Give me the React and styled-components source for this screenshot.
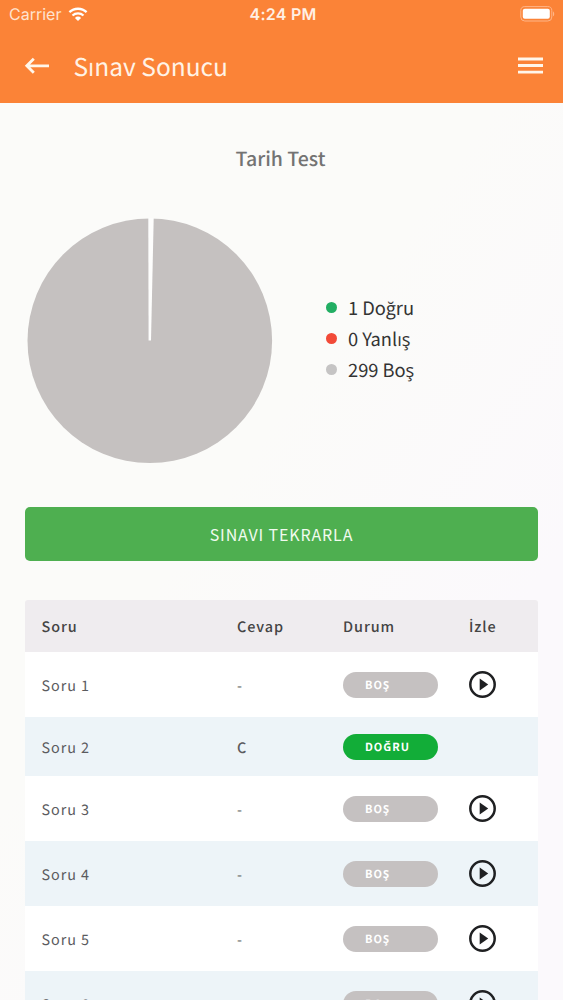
import styled, { createGlobalStyle } from "styled-components";

const legend = [
  { label: "1 Doğru", color: "#22ae63" },
  { label: "0 Yanlış", color: "#f24a38" },
  { label: "299 Boş", color: "#c5c4c4" },
];

const questions = [
  { name: "Soru 1", answer: "-", status: "BOŞ" },
  { name: "Soru 2", answer: "C", status: "DOĞRU", correct: true },
  { name: "Soru 3", answer: "-", status: "BOŞ" },
  { name: "Soru 4", answer: "-", status: "BOŞ" },
  { name: "Soru 5", answer: "-", status: "BOŞ" },
  { name: "Soru 6", answer: "-", status: "BOŞ" },
];

function Wifi() {
  return (
    <svg width="20" height="14" viewBox="0 0 20 14" fill="none">
      <path d="M1.4 5.2a12.4 12.4 0 0 1 17.2 0" stroke="#fff" strokeWidth="2.3" />
      <path d="M4.5 8.5a8 8 0 0 1 11 0" stroke="#fff" strokeWidth="2.2" />
      <path d="M10 14 6.9 10.9a4.4 4.4 0 0 1 6.2 0z" fill="#fff" />
    </svg>
  );
}

function Battery() {
  return (
    <svg width="35" height="16" viewBox="0 0 35 16" fill="none">
      <rect x="0.8" y="0.6" width="31" height="14.4" rx="4" stroke="#ffb588" strokeWidth="1" />
      <rect x="2.8" y="2.8" width="27" height="10" rx="2" fill="#fff" />
      <path d="M33 5.4c1.6.6 1.6 4.2 0 4.8z" fill="#ffb588" />
    </svg>
  );
}

function ArrowBack() {
  return (
    <svg width="26" height="18" viewBox="0 0 26 18" fill="none">
      <path d="M25 8.8H3M9.8 1.8 2.8 8.8l7 7" stroke="#fff6ea" strokeWidth="2.8" />
    </svg>
  );
}

function Menu() {
  return (
    <svg width="25" height="18" viewBox="0 0 25 18">
      <path d="M0 .6h25v2.9H0zM0 7.1h25v2.9H0zM0 13.7h25v2.9H0z" fill="#fff6ea" />
    </svg>
  );
}

function PlayCircle() {
  return (
    <svg width="27" height="27" viewBox="0 0 27 27">
      <circle cx="13.5" cy="13.5" r="12.2" fill="none" stroke="#1f2022" strokeWidth="2.5" />
      <path d="M10.7 7.5v12l8.5-6z" fill="#1f2022" />
    </svg>
  );
}

function PieChart() {
  return (
    <svg width="246" height="246" viewBox="0 0 246 246">
      <circle cx="122.8" cy="122.8" r="122.3" fill="#c5c1c0" />
      <path d="M121.3 0h5.4L124 122.6h-2.4z" fill="#fdfdfc" />
    </svg>
  );
}

export default function App() {
  return (
    <Screen>
      <GlobalStyle />
      <Header>
        <StatusBar>
          <Carrier>
            Carrier <Wifi />
          </Carrier>
          <Time>4:24 PM</Time>
          <BatterySlot>
            <Battery />
          </BatterySlot>
        </StatusBar>
        <NavBar>
          <ArrowBack />
          <h1>Sınav Sonucu</h1>
          <Menu />
        </NavBar>
      </Header>
      <Content>
        <Title>Tarih Test</Title>
        <Summary>
          <PieChart />
          <Legend>
            {legend.map((item) => (
              <LegendItem key={item.label} $color={item.color}>
                {item.label}
              </LegendItem>
            ))}
          </Legend>
        </Summary>
        <RetryButton>SINAVI TEKRARLA</RetryButton>
        <Table>
          <HeadRow>
            <Cell>Soru</Cell>
            <Cell>Cevap</Cell>
            <Cell>Durum</Cell>
            <Cell>
              <DottedI>İ</DottedI>zle
            </Cell>
          </HeadRow>
          {questions.map((q) => (
            <Row key={q.name} $correct={q.correct}>
              <Cell>{q.name}</Cell>
              <Answer $correct={q.correct}>{q.answer}</Answer>
              <Badge $correct={q.correct}>{q.status}</Badge>
              {!q.correct && <PlayCircle />}
            </Row>
          ))}
        </Table>
      </Content>
    </Screen>
  );
}

const GlobalStyle = createGlobalStyle`
  * {
    box-sizing: border-box;
  }
  body {
    margin: 0;
    overflow: hidden;
    font-family: "Noto Sans CJK SC", "Open Sans", sans-serif;
    text-rendering: geometricPrecision;
  }
  svg {
    display: block;
    flex-shrink: 0;
  }
`;
const Screen = styled.div`
  height: 1000px;
  overflow: hidden;
  background: linear-gradient(125deg, #fbfbf9 45%, #fbf9fc 75%);
`;
const Header = styled.header`
  height: 103px;
  background: #fb8337;
  color: #fff;
`;
const StatusBar = styled.div`
  height: 28px;
  padding: 0 8px 0 9px;
  display: grid;
  grid-template-columns: 1fr auto 1fr;
  align-items: center;
  font-family: Inter, sans-serif;
  font-size: 16px;
  line-height: 20px;
`;
const Carrier = styled.div`
  display: flex;
  align-items: center;
  gap: 7px;
  color: #ffe3cf;
`;
const Time = styled.div`
  padding-left: 2px;
  font-weight: 600;
  letter-spacing: 0.25px;
  color: #fff0e4;
`;
const BatterySlot = styled.div`
  display: flex;
  justify-content: flex-end;
`;
const NavBar = styled.div`
  height: 75px;
  padding: 0 20px 0 24px;
  display: flex;
  align-items: center;
  h1 {
    flex: 1;
    margin: 0 0 0 23.5px;
    padding-top: 2px;
    font-size: 24.5px;
    line-height: 36px;
    font-weight: 400;
    color: #fff3e6;
  }
`;
const Content = styled.main`
  padding: 40px 25px 0;
`;
const Title = styled.h2`
  margin: 0 2px 0 0;
  height: 30px;
  font-size: 19.5px;
  line-height: 30px;
  font-weight: 500;
  text-align: center;
  color: #737373;
`;
const Summary = styled.section`
  height: 246px;
  margin: 45px 0 43px 2px;
  display: flex;
  align-items: center;
  gap: 53px;
`;
const Legend = styled.ul`
  margin: 0;
  padding: 0 0 3px;
  list-style: none;
`;
const LegendItem = styled.li`
  height: 31px;
  display: flex;
  align-items: center;
  font-size: 18.3px;
  line-height: 31px;
  color: #333;
  &::before {
    content: "";
    width: 11px;
    height: 11px;
    margin: 0 11px 2px 0;
    border-radius: 50%;
    background: ${(props) => props.$color};
  }
`;
const RetryButton = styled.button`
  display: block;
  width: 513px;
  height: 54px;
  padding: 0;
  border: none;
  border-radius: 5px;
  background: #4eaf50;
  color: #f1fbef;
  font-family: inherit;
  font-size: 16px;
  letter-spacing: 0.87px;
`;
const Table = styled.div`
  width: 513px;
  margin-top: 39px;
`;
const HeadRow = styled.div`
  display: grid;
  grid-template-columns: 195.5px 106px 126px 1fr;
  align-items: center;
  height: 52px;
  padding-left: 16.5px;
  border-radius: 3px 3px 0 0;
  background: #efecef;
  color: #444;
  font-size: 14.4px;
  line-height: 22px;
  font-weight: 500;
  letter-spacing: 0.95px;
`;
const Row = styled(HeadRow)`
  height: ${(props) => (props.$correct ? "59px" : "65px")};
  border-radius: 0;
  background: #fff;
  color: #5b5b5e;
  font-weight: 400;
  &:nth-child(odd) {
    background: #edf4f8;
  }
`;
const Cell = styled.span`
  padding-top: 2px;
`;
const DottedI = styled.span`
  font-family: "Open Sans", sans-serif;
  font-weight: 600;
  line-height: 1;
`;
const Answer = styled(Cell)`
  font-weight: ${(props) => (props.$correct ? 500 : 400)};
`;
const Badge = styled.span`
  width: 95px;
  height: 26px;
  padding-left: 22px;
  border-radius: 13px;
  background: ${(props) => (props.$correct ? "#12ad38" : "#c5c1c1")};
  color: #fff;
  font-size: 11px;
  line-height: 26px;
  font-weight: 700;
  letter-spacing: 1px;
`;
